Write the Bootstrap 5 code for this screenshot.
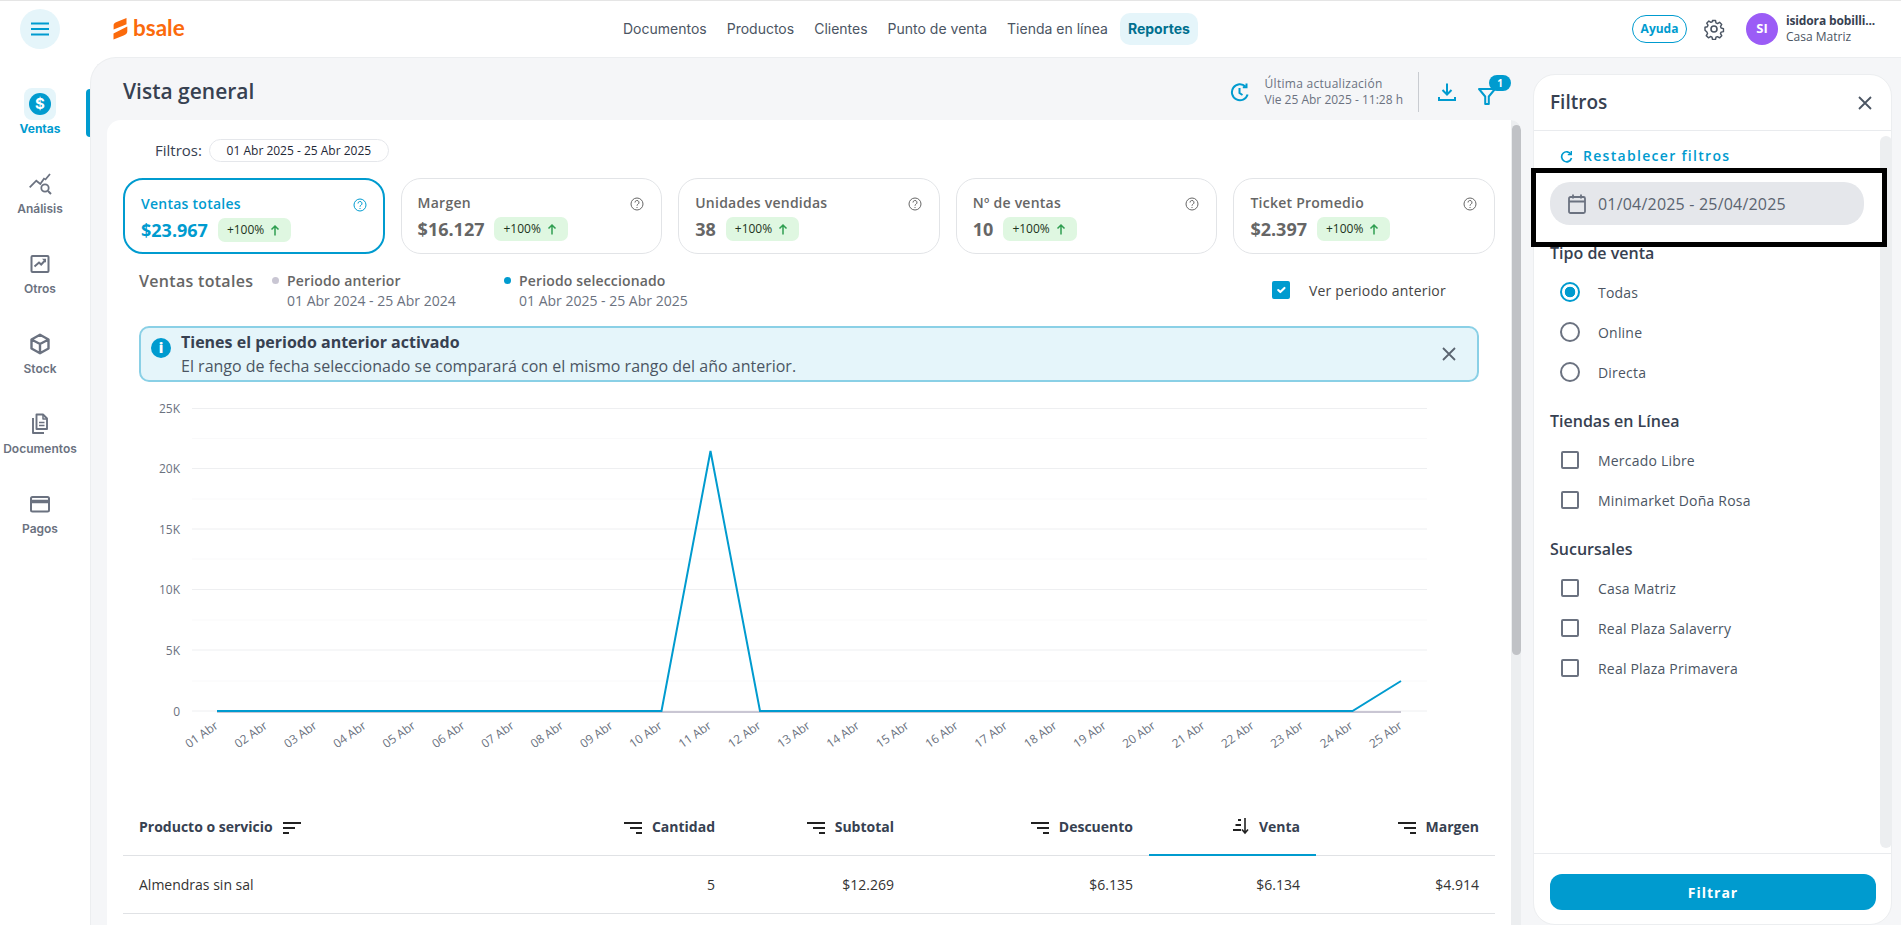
<!doctype html>
<html lang="es">
<head>
<meta charset="utf-8">
<title>Vista general</title>
<link href="https://cdn.jsdelivr.net/npm/bootstrap@5.3.0/dist/css/bootstrap.min.css" rel="stylesheet">
<style>
:root{--brand:#009bcf;--ink:#374151;--mut:#6b7280;}
html,body{height:100%;}
body{font-family:"Open Sans",sans-serif;color:var(--ink);background:#fff;overflow:hidden;}
.shell{height:925px;border-top:1px solid #e5e5e5;}
.topbar{height:56px;flex:none;}
.burger{width:40px;height:40px;margin-left:20px;background:#e5f5fa;border:0;padding:0;}
.logo-wrap{margin-left:53px;width:71px;color:#fb6a0c;}
.logo-word{font-family:"Lato",sans-serif;font-weight:700;font-size:22.5px;line-height:1;margin-left:5px;margin-top:-1px;}
.mainnav{font-family:"Inter",sans-serif;font-size:14px;margin-left:439px;}
.mainnav a{color:#4b5563;text-decoration:none;padding:0;display:block;line-height:32px;}
.mainnav .it{margin-right:20px;}
.mainnav a.on{background:#e5f5fa;color:#00708f;font-weight:700;border-radius:10px;padding:0 8px;margin-left:-8px;}
.help-pill{width:55px;height:28px;border:1px solid var(--brand);border-radius:14px;color:var(--brand);background:#fff;font-size:12px;font-weight:700;padding:0;}
.gear{margin-left:15px;}
.ava{width:32px;height:32px;background:#9b5cf6;color:#fff;font-size:13px;font-weight:700;margin-left:20px;}
.uname{font-size:12px;font-weight:700;line-height:16px;color:#374151;letter-spacing:-.15px;}
.usub{font-size:12px;line-height:16px;color:#4b5563;}
.side{width:90px;flex:none;padding-top:31px;}
.sitem{display:block;height:80px;position:relative;text-decoration:none;color:var(--mut);text-align:center;font-family:"Inter",sans-serif;font-size:12px;font-weight:600;line-height:16px;padding-right:10px;}
.sicon{width:32px;height:32px;margin:0 auto 1px;display:flex;align-items:center;justify-content:center;border-radius:8px;}
.sitem.on{color:var(--brand);font-weight:700;}
.sitem.on .sicon{background:#e5f5fa;}
.sitem.on::after{content:"";position:absolute;right:0;top:1px;width:4px;height:48px;background:var(--brand);border-radius:4px 0 0 4px;}
.dollar{width:22px;height:22px;border-radius:50%;background:var(--brand);color:#fff;font-size:15px;font-weight:700;line-height:22px;text-align:center;}
.stage{background:#f5f6f8;border-top:1px solid #eceef0;border-left:1px solid #eceef0;border-top-left-radius:26px;padding:0 9px 0 16px;min-width:0;}
.leftcol{min-width:0;}
.tools{height:62px;flex:none;padding-left:16px;padding-top:6px;}
.ptitle{font-size:21px;font-weight:600;color:#374151;margin:0;}
.upd{font-size:12px;line-height:16px;color:var(--mut);margin-left:15px;}
.upd-a{font-weight:500;letter-spacing:.28px;}
.vdiv{width:1px;height:40px;background:#c9ccd1;margin:0 18px 0 15px;}
.fbadge{position:absolute;top:-7px;left:12px;width:22px;height:16px;border-radius:8px;background:var(--brand);color:#fff;font-size:10px;font-weight:700;line-height:16px;text-align:center;}
.sheet{background:#fff;border-radius:14px 10px 0 0;min-height:0;overflow:hidden;}
.sheet-in{width:1404px;padding:19px 16px 0;flex:none;}
.track{width:11px;flex:none;background:#eceef0;padding-top:5px;}
.thumb{height:530px;width:9px;margin-left:1px;background:#c0c2c6;border-radius:5px;}
.flabel{font-size:15px;font-weight:500;margin-left:32px;margin-right:7px;}
.fpill{height:23px;width:180px;border:1px solid #e5e7eb;border-radius:12px;font-size:12px;font-weight:500;color:#1f2937;text-align:center;line-height:21px;}
.kpis{margin-top:16px;gap:16px;}
.kpi{flex:0 0 261.6px;height:76px;border:1px solid #e2e4e7;border-radius:20px;padding:14px 16px 0 16px;position:relative;color:#666;}
.kpi.on{border:2px solid var(--brand);color:var(--brand);padding:14px 16px 0 16px;}
.ktitle{font-size:14px;font-weight:600;line-height:20px;letter-spacing:.25px;}
.kval{font-size:18px;font-weight:700;line-height:24px;margin-top:4px;gap:10px;}
.kbadge{height:24px;background:#dff7e1;border-radius:7px;font-size:12px;font-weight:400;line-height:24px;color:#1d3320;padding:0 10px 0 9px;gap:5px;letter-spacing:0;}
.qm{position:absolute;right:17px;top:18px;}
.kpi.on .qm{right:16px;top:18px;}
.charthead{margin-top:17px;height:40px;padding-left:16px;position:relative;}
.chead-t{font-size:16px;font-weight:600;color:#666;line-height:20px;width:133px;letter-spacing:.3px;}
.leg{font-size:14px;line-height:20px;color:#6b7280;}
.leg b{font-weight:600;color:#666;display:block;letter-spacing:.15px;}
.ldot{width:7px;height:7px;border-radius:50%;margin:6px 8px 0 0;flex:none;}
.form-check-input{border:2px solid #6b7280;box-shadow:none;margin:0;float:none;flex:none;}
.form-check-input[type=checkbox]{width:18px;height:18px;border-radius:2px;}
.form-check-input[type=radio]{width:20px;height:20px;}
.form-check-input:checked{background-color:var(--brand);border-color:var(--brand);}
.form-check-input:checked[type=radio]{background-color:#fff;--bs-form-check-bg-image:radial-gradient(circle,#009bcf 0 5px,transparent 5.6px);}
.seeprev{position:absolute;left:1149px;top:9px;font-size:14px;color:#444;gap:19px;height:20px;letter-spacing:.2px;}
.infobar{margin:15px 0 0 16px;width:1340px;height:56px;background:#e5f5fa;border:2px solid #8ad0e6;border-radius:10px;padding:0 21px 0 10px;font-size:16px;line-height:24px;color:#4b5563;}
.infobar strong{font-weight:700;color:#374151;display:block;}
.infoc{width:20px;height:20px;border-radius:50%;background:var(--brand);color:#fff;font-size:14px;font-weight:800;line-height:20px;text-align:center;margin-right:10px;margin-top:-12px;flex:none;font-family:"Open Sans",sans-serif;}
.chartbox{display:block;width:1372px;height:416px;}
.chartbox text{font-family:"Open Sans",sans-serif;font-size:12px;fill:#6b7280;}
.rep{table-layout:fixed;width:1372px;margin:0;font-size:14px;}
.rep th{height:57px;font-weight:700;color:#374151;border-bottom:1px solid #e0e2e5;padding:0 16px;text-align:right;vertical-align:middle;white-space:nowrap;}
.rep td{height:58px;color:#333;border-bottom:1px solid #e0e2e5;padding:0 16px;text-align:right;vertical-align:middle;}
.rep th:first-child,.rep td:first-child{text-align:left;}
.rep th.act{border-bottom:2px solid var(--brand);}
.rep svg{vertical-align:-3px;margin-right:10px;}
.panel{width:359px;flex:none;margin:16px 0 0 12px;background:#fff;border:1px solid #eceef0;border-radius:22px;min-height:0;}
.phead{height:56px;flex:none;border-bottom:1px solid #e9ebee;padding:0 19px 0 16px;}
.phead h2{font-size:19px;font-weight:600;margin:0;color:#374151;}
.pbody{min-height:0;}
.pscroll{width:12px;flex:none;background:#eceef0;border-radius:6px;margin:5px 0 5px 0;}
.pin{padding-top:15px;min-width:0;width:346px;flex:none;}
.reset{font-size:14px;font-weight:600;color:var(--brand);letter-spacing:1.3px;padding-left:26px;line-height:20px;gap:10px;height:20px;}
.hl{position:relative;z-index:2;background:#fff;border:5px solid #000;height:79px;margin:2px 0 0 -3px;width:356px;padding-left:14px;padding-top:9px;}
.datef{width:314px;height:43px;background:#e5e7eb;border-radius:20px;font-size:16px;color:#5b6470;padding-left:18px;gap:12px;letter-spacing:.2px;}
.fsec{font-size:16px;font-weight:600;line-height:24px;color:#374151;margin:0 0 0 16px;}
.fgroup{margin-top:7px;}
.fsec2{margin-top:17px;}
.fopt{height:40px;padding-left:26px;gap:18px;font-size:14px;letter-spacing:.2px;color:#4b5563;}
.fopt.cb{padding-left:27px;gap:19px;}
.pfoot{height:71px;flex:none;border-top:1px solid #e9ebee;padding:20px 16px 0 16px;}
.gobtn{width:326px;height:36px;background:var(--brand);border:0;border-radius:12px;color:#fff;font-size:14px;font-weight:700;letter-spacing:1px;padding:0;}
</style>
</head>
<body>
<div class="shell d-flex flex-column">
  <header class="topbar d-flex align-items-center">
    <button class="burger rounded-circle d-flex align-items-center justify-content-center" aria-label="menu">
      <svg width="18" height="14" viewBox="0 0 18 14"><path d="M0 1.500h18M0 7h18M0 12.500h18" stroke="#009bcf" stroke-width="2"/></svg>
    </button>
    <div class="logo-wrap d-flex align-items-center">
      <svg width="15" height="22" viewBox="0 0 15 22" class="flex-shrink-0"><path d="M13.500 0 L3 4.200 C1 5 .6 6 .6 7.400 V11.500 L10.500 7.600 L13.500 6.200Z M14.300 8.600 L.5 15.600 L.5 21.500 L10.600 17.600 C12.600 16.800 14.300 15.600 14.300 13.600Z" fill="#fb6a0c"/></svg>
      <span class="logo-word">bsale</span>
    </div>
    <nav class="mainnav d-flex align-items-center">
      <div class="it"><a href="#">Documentos</a></div>
      <div class="it"><a href="#">Productos</a></div>
      <div class="it"><a href="#">Clientes</a></div>
      <div class="it"><a href="#">Punto de venta</a></div>
      <div class="it"><a href="#">Tienda en línea</a></div>
      <div><a href="#" class="on">Reportes</a></div>
    </nav>
    <div class="ms-auto d-flex align-items-center" style="margin-right:26px">
      <button class="help-pill">Ayuda</button>
      <svg class="gear" width="24" height="24" viewBox="0 0 24 24" fill="none" stroke="#4b5563" stroke-width="1.600" stroke-linejoin="round"><path d="M10.300 3h3.400l.5 2.600 1.700.8 2.300-1.400 2.400 2.400-1.400 2.300.7 1.700 2.600.6v3.400l-2.600.5-.7 1.700 1.400 2.300-2.400 2.400-2.300-1.400-1.700.7-.5 2.400h-3.400l-.5-2.500-1.700-.7-2.300 1.400-2.400-2.400 1.400-2.300-.7-1.700L2 13.900v-3.400l2.600-.6.7-1.700L3.900 6 6.300 3.600 8.600 5l1.700-.7z" transform="translate(1.200 .8) scale(.9)"/><circle cx="12" cy="12" r="3"/></svg>
      <div class="ava rounded-circle d-flex align-items-center justify-content-center">SI</div>
      <div class="ms-2 ps-0">
        <div class="uname">isidora bobilli...</div>
        <div class="usub">Casa Matriz</div>
      </div>
    </div>
  </header>

  <div class="d-flex flex-grow-1" style="min-height:0">
    <aside class="side">
      <a href="#" class="sitem on"><span class="sicon"><span class="dollar">$</span></span>Ventas</a>
      <a href="#" class="sitem"><span class="sicon"><svg width="24" height="24" viewBox="0 0 24 24" fill="none" stroke="#6b7280" stroke-width="1.800"><path d="M1.700 15.300 8.300 8.700 12.300 12 16.500 6M17 8l5-6"/><circle cx="17" cy="16" r="3.700"/><path d="M20 19l3 3" stroke-width="2"/></svg></span>Análisis</a>
      <a href="#" class="sitem"><span class="sicon"><svg width="20" height="20" viewBox="0 0 20 20" fill="none" stroke="#6b7280" stroke-width="2"><rect x="1.500" y="2" width="17" height="16" rx="1"/><path d="M4.500 12.500 9 8.500l2.200 2L15 6.500"/><path d="M12 4.800h4v4z" fill="#6b7280" stroke="none"/></svg></span>Otros</a>
      <a href="#" class="sitem"><span class="sicon"><svg width="22" height="22" viewBox="0 0 22 22" fill="none" stroke="#6b7280" stroke-width="2.400" stroke-linejoin="round"><path d="M11 1.800l8.500 4.700v9L11 20.200l-8.500-4.700v-9zM2.500 6.500 11 11l8.500-4.500M11 11v9"/></svg></span>Stock</a>
      <a href="#" class="sitem"><span class="sicon"><svg width="20" height="22" viewBox="0 0 20 22" fill="none" stroke="#6b7280" stroke-width="1.900" stroke-linejoin="round"><path d="M6.500 1.500h6.500l4 4V16H6.500z"/><path d="M9 9.500h5.500M9 12.500h5.500M13 1.500V6h4" stroke-width="1.500"/><path d="M3 5v15h11"/></svg></span>Documentos</a>
      <a href="#" class="sitem"><span class="sicon"><svg width="22" height="18" viewBox="0 0 22 18" fill="none" stroke="#6b7280" stroke-width="2"><rect x="2" y="2" width="18" height="14.500" rx="1.500"/><path d="M2 6.500h18" stroke-width="3.500"/></svg></span>Pagos</a>
    </aside>

    <main class="stage flex-grow-1 d-flex" style="min-width:0">
      <div class="leftcol flex-grow-1 d-flex flex-column">
        <div class="tools d-flex align-items-center">
          <h1 class="ptitle">Vista general</h1>
          <div class="ms-auto d-flex align-items-center" style="margin-right:24px">
            <svg width="20" height="20" viewBox="0 0 20 20" fill="none" stroke="#009bcf" stroke-width="2"><path d="M17.600 12.500A8 8 0 1 1 15.500 4.500"/><path d="M16.500 1.500V5.200H12.800"/><path d="M9.500 6v5l3 2"/></svg>
            <div class="upd"><div class="upd-a">Última actualización</div><div>Vie 25 Abr 2025 - 11:28 h</div></div>
            <div class="vdiv"></div>
            <svg width="20" height="20" viewBox="0 0 20 20" fill="none" stroke="#009bcf" stroke-width="2"><path d="M10 1.500V12M5.500 8 10 12.500 14.500 8M2 15V18h16v-3"/></svg>
            <div class="position-relative" style="margin-left:20px;width:20px;height:20px">
              <svg width="20" height="20" viewBox="0 0 20 20" fill="none" stroke="#009bcf" stroke-width="2" stroke-linejoin="round"><path d="M2 3h16l-6.200 7.500V18H8.200V10.500z"/></svg>
              <span class="fbadge">1</span>
            </div>
          </div>
        </div>
        <div class="sheet flex-grow-1 d-flex">
          <div class="sheet-in">
            <div class="d-flex align-items-center"><span class="flabel">Filtros:</span><span class="fpill">01 Abr 2025 - 25 Abr 2025</span></div>

            <div class="kpis d-flex">
              <div class="kpi on"><div class="ktitle">Ventas totales</div><div class="kval d-flex align-items-center">$23.967 <span class="kbadge d-flex">+100% <svg width="12" height="24" viewBox="0 0 12 24" fill="none" stroke="#2f9e50" stroke-width="1.500"><path d="M6 17.500V8M2.500 11.500 6 8l3.500 3.500"/></svg></span></div>
                <svg class="qm" width="14" height="14" viewBox="0 0 14 14" fill="none" stroke="currentColor"><circle cx="7" cy="7" r="6"/><path d="M5 5.500a2 2 0 1 1 3 1.700c-.7.400-1 .8-1 1.500M7 10v1"/></svg></div>
              <div class="kpi"><div class="ktitle">Margen</div><div class="kval d-flex align-items-center">$16.127 <span class="kbadge d-flex">+100% <svg width="12" height="24" viewBox="0 0 12 24" fill="none" stroke="#2f9e50" stroke-width="1.500"><path d="M6 17.500V8M2.500 11.500 6 8l3.500 3.500"/></svg></span></div>
                <svg class="qm" width="14" height="14" viewBox="0 0 14 14" fill="none" stroke="currentColor"><circle cx="7" cy="7" r="6"/><path d="M5 5.500a2 2 0 1 1 3 1.700c-.7.400-1 .8-1 1.500M7 10v1"/></svg></div>
              <div class="kpi"><div class="ktitle">Unidades vendidas</div><div class="kval d-flex align-items-center">38 <span class="kbadge d-flex">+100% <svg width="12" height="24" viewBox="0 0 12 24" fill="none" stroke="#2f9e50" stroke-width="1.500"><path d="M6 17.500V8M2.500 11.500 6 8l3.500 3.500"/></svg></span></div>
                <svg class="qm" width="14" height="14" viewBox="0 0 14 14" fill="none" stroke="currentColor"><circle cx="7" cy="7" r="6"/><path d="M5 5.500a2 2 0 1 1 3 1.700c-.7.400-1 .8-1 1.500M7 10v1"/></svg></div>
              <div class="kpi"><div class="ktitle">Nº de ventas</div><div class="kval d-flex align-items-center">10 <span class="kbadge d-flex">+100% <svg width="12" height="24" viewBox="0 0 12 24" fill="none" stroke="#2f9e50" stroke-width="1.500"><path d="M6 17.500V8M2.500 11.500 6 8l3.500 3.500"/></svg></span></div>
                <svg class="qm" width="14" height="14" viewBox="0 0 14 14" fill="none" stroke="currentColor"><circle cx="7" cy="7" r="6"/><path d="M5 5.500a2 2 0 1 1 3 1.700c-.7.400-1 .8-1 1.500M7 10v1"/></svg></div>
              <div class="kpi"><div class="ktitle">Ticket Promedio</div><div class="kval d-flex align-items-center">$2.397 <span class="kbadge d-flex">+100% <svg width="12" height="24" viewBox="0 0 12 24" fill="none" stroke="#2f9e50" stroke-width="1.500"><path d="M6 17.500V8M2.500 11.500 6 8l3.500 3.500"/></svg></span></div>
                <svg class="qm" width="14" height="14" viewBox="0 0 14 14" fill="none" stroke="currentColor"><circle cx="7" cy="7" r="6"/><path d="M5 5.500a2 2 0 1 1 3 1.700c-.7.400-1 .8-1 1.500M7 10v1"/></svg></div>
            </div>

            <div class="charthead d-flex">
              <div class="chead-t">Ventas totales</div>
              <div class="leg d-flex" style="width:232px"><span class="ldot" style="background:#c9c6d3"></span><div><b>Periodo anterior</b>01 Abr 2024 - 25 Abr 2024</div></div>
              <div class="leg d-flex"><span class="ldot" style="background:#009bcf"></span><div><b>Periodo seleccionado</b>01 Abr 2025 - 25 Abr 2025</div></div>
              <div class="seeprev d-flex align-items-center"><input class="form-check-input" type="checkbox" checked aria-label="Ver periodo anterior"><span>Ver periodo anterior</span></div>
            </div>

            <div class="infobar d-flex align-items-center">
              <span class="infoc">i</span>
              <div class="flex-grow-1"><strong>Tienes el periodo anterior activado</strong>El rango de fecha seleccionado se comparará con el mismo rango del año anterior.</div>
              <svg width="14" height="14" viewBox="0 0 14 14" fill="none" stroke="#5b6470" stroke-width="1.800"><path d="M1 1l12 12M13 1 1 13"/></svg>
            </div>

            <svg class="chartbox" viewBox="123 382 1372 416">
              <g stroke="#f9f9fa"><path d="M192 438.500H1427M192 499H1427M192 559H1427M192 620H1427M192 681H1427"/></g>
              <g stroke="#eeeff1"><path d="M192 408.500H1427M192 468.500H1427M192 529H1427M192 589.500H1427M192 650H1427M192 711H1427"/></g>
              <g text-anchor="end">
                <text x="180" y="413">25K</text><text x="180" y="473">20K</text><text x="180" y="534">15K</text><text x="180" y="594">10K</text><text x="180" y="655">5K</text><text x="180" y="716">0</text>
              </g>
              <path d="M217 712H1401" stroke="#c9c6d3" stroke-width="2" fill="none"/>
              <path d="M217 711H661.500L710.500 451 760 711H1352.500L1401 681" stroke="#009bcf" stroke-width="2" fill="none"/>
              <g text-anchor="end">
                <text transform="translate(219 727.500) rotate(-35)">01 Abr</text>
                <text transform="translate(268.300 727.500) rotate(-35)">02 Abr</text>
                <text transform="translate(317.700 727.500) rotate(-35)">03 Abr</text>
                <text transform="translate(367 727.500) rotate(-35)">04 Abr</text>
                <text transform="translate(416.300 727.500) rotate(-35)">05 Abr</text>
                <text transform="translate(465.700 727.500) rotate(-35)">06 Abr</text>
                <text transform="translate(515 727.500) rotate(-35)">07 Abr</text>
                <text transform="translate(564.300 727.500) rotate(-35)">08 Abr</text>
                <text transform="translate(613.700 727.500) rotate(-35)">09 Abr</text>
                <text transform="translate(663 727.500) rotate(-35)">10 Abr</text>
                <text transform="translate(712.300 727.500) rotate(-35)">11 Abr</text>
                <text transform="translate(761.700 727.500) rotate(-35)">12 Abr</text>
                <text transform="translate(811 727.500) rotate(-35)">13 Abr</text>
                <text transform="translate(860.300 727.500) rotate(-35)">14 Abr</text>
                <text transform="translate(909.700 727.500) rotate(-35)">15 Abr</text>
                <text transform="translate(959 727.500) rotate(-35)">16 Abr</text>
                <text transform="translate(1008.300 727.500) rotate(-35)">17 Abr</text>
                <text transform="translate(1057.700 727.500) rotate(-35)">18 Abr</text>
                <text transform="translate(1107 727.500) rotate(-35)">19 Abr</text>
                <text transform="translate(1156.300 727.500) rotate(-35)">20 Abr</text>
                <text transform="translate(1205.700 727.500) rotate(-35)">21 Abr</text>
                <text transform="translate(1255 727.500) rotate(-35)">22 Abr</text>
                <text transform="translate(1304.300 727.500) rotate(-35)">23 Abr</text>
                <text transform="translate(1353.700 727.500) rotate(-35)">24 Abr</text>
                <text transform="translate(1403 727.500) rotate(-35)">25 Abr</text>
              </g>
            </svg>

            <table class="table rep">
              <colgroup><col style="width:400px"><col style="width:208px"><col style="width:179px"><col style="width:239px"><col style="width:167px"><col style="width:179px"></colgroup>
              <thead><tr>
                <th>Producto o servicio <svg style="margin:0 0 0 7px" width="18" height="14" viewBox="0 0 18 14" stroke="#222" stroke-width="2"><path d="M0 2h18M0 7h12M0 12h6"/></svg></th>
                <th><svg width="18" height="14" viewBox="0 0 18 14" stroke="#222" stroke-width="2"><path d="M0 2h18M6 7h12M12 12h6"/></svg>Cantidad</th>
                <th><svg width="18" height="14" viewBox="0 0 18 14" stroke="#222" stroke-width="2"><path d="M0 2h18M6 7h12M12 12h6"/></svg>Subtotal</th>
                <th><svg width="18" height="14" viewBox="0 0 18 14" stroke="#222" stroke-width="2"><path d="M0 2h18M6 7h12M12 12h6"/></svg>Descuento</th>
                <th class="act"><svg width="18" height="18" viewBox="0 0 18 18" fill="none" stroke="#222"><path d="M7 3h3M4.500 8h5.500M2 13h8" stroke-width="2"/><path d="M14 1v15M11 12.500l3 3.500 3-3.500" stroke-width="1.600"/></svg>Venta</th>
                <th><svg width="18" height="14" viewBox="0 0 18 14" stroke="#222" stroke-width="2"><path d="M0 2h18M6 7h12M12 12h6"/></svg>Margen</th>
              </tr></thead>
              <tbody><tr><td>Almendras sin sal</td><td>5</td><td>$12.269</td><td>$6.135</td><td>$6.134</td><td>$4.914</td></tr></tbody>
            </table>
          </div>
          <div class="track"><div class="thumb"></div></div>
        </div>
      </div>

      <section class="panel d-flex flex-column">
        <div class="phead d-flex align-items-center justify-content-between">
          <h2>Filtros</h2>
          <svg width="14" height="14" viewBox="0 0 14 14" fill="none" stroke="#4b5563" stroke-width="1.800"><path d="M1 1l12 12M13 1 1 13"/></svg>
        </div>
        <div class="pbody flex-grow-1 d-flex">
          <div class="pin">
            <div class="reset d-flex align-items-center">
              <svg width="13" height="13" viewBox="0 0 13 13" fill="none" stroke="#009bcf" stroke-width="1.700"><path d="M11 4.300A5 5 0 1 0 11.500 8"/><path d="M11.300 1v3.600H7.800" stroke-width="1.400"/></svg>
              <span>Restablecer filtros</span>
            </div>
            <div class="hl">
              <div class="datef d-flex align-items-center">
                <svg width="18" height="20" viewBox="0 0 18 20" fill="none" stroke="#6b7280" stroke-width="1.800"><rect x="1" y="3" width="16" height="16" rx="1.500"/><path d="M1 7.500h16M5 .5v4M13 .5v4"/></svg>
                <span>01/04/2025 - 25/04/2025</span>
              </div>
            </div>
            <h3 class="fsec" style="margin-top:-6px">Tipo de venta</h3>
            <div class="fgroup">
              <label class="fopt d-flex align-items-center"><input class="form-check-input" type="radio" name="tv" checked><span>Todas</span></label>
              <label class="fopt d-flex align-items-center"><input class="form-check-input" type="radio" name="tv"><span>Online</span></label>
              <label class="fopt d-flex align-items-center"><input class="form-check-input" type="radio" name="tv"><span>Directa</span></label>
            </div>
            <h3 class="fsec fsec2">Tiendas en Línea</h3>
            <div class="fgroup">
              <label class="fopt cb d-flex align-items-center"><input class="form-check-input" type="checkbox"><span>Mercado Libre</span></label>
              <label class="fopt cb d-flex align-items-center"><input class="form-check-input" type="checkbox"><span>Minimarket Doña Rosa</span></label>
            </div>
            <h3 class="fsec fsec2">Sucursales</h3>
            <div class="fgroup">
              <label class="fopt cb d-flex align-items-center"><input class="form-check-input" type="checkbox"><span>Casa Matriz</span></label>
              <label class="fopt cb d-flex align-items-center"><input class="form-check-input" type="checkbox"><span>Real Plaza Salaverry</span></label>
              <label class="fopt cb d-flex align-items-center"><input class="form-check-input" type="checkbox"><span>Real Plaza Primavera</span></label>
            </div>
          </div>
          <div class="pscroll"></div>
        </div>
        <div class="pfoot"><button class="gobtn">Filtrar</button></div>
      </section>
    </main>
  </div>
</div>
</body>
</html>
